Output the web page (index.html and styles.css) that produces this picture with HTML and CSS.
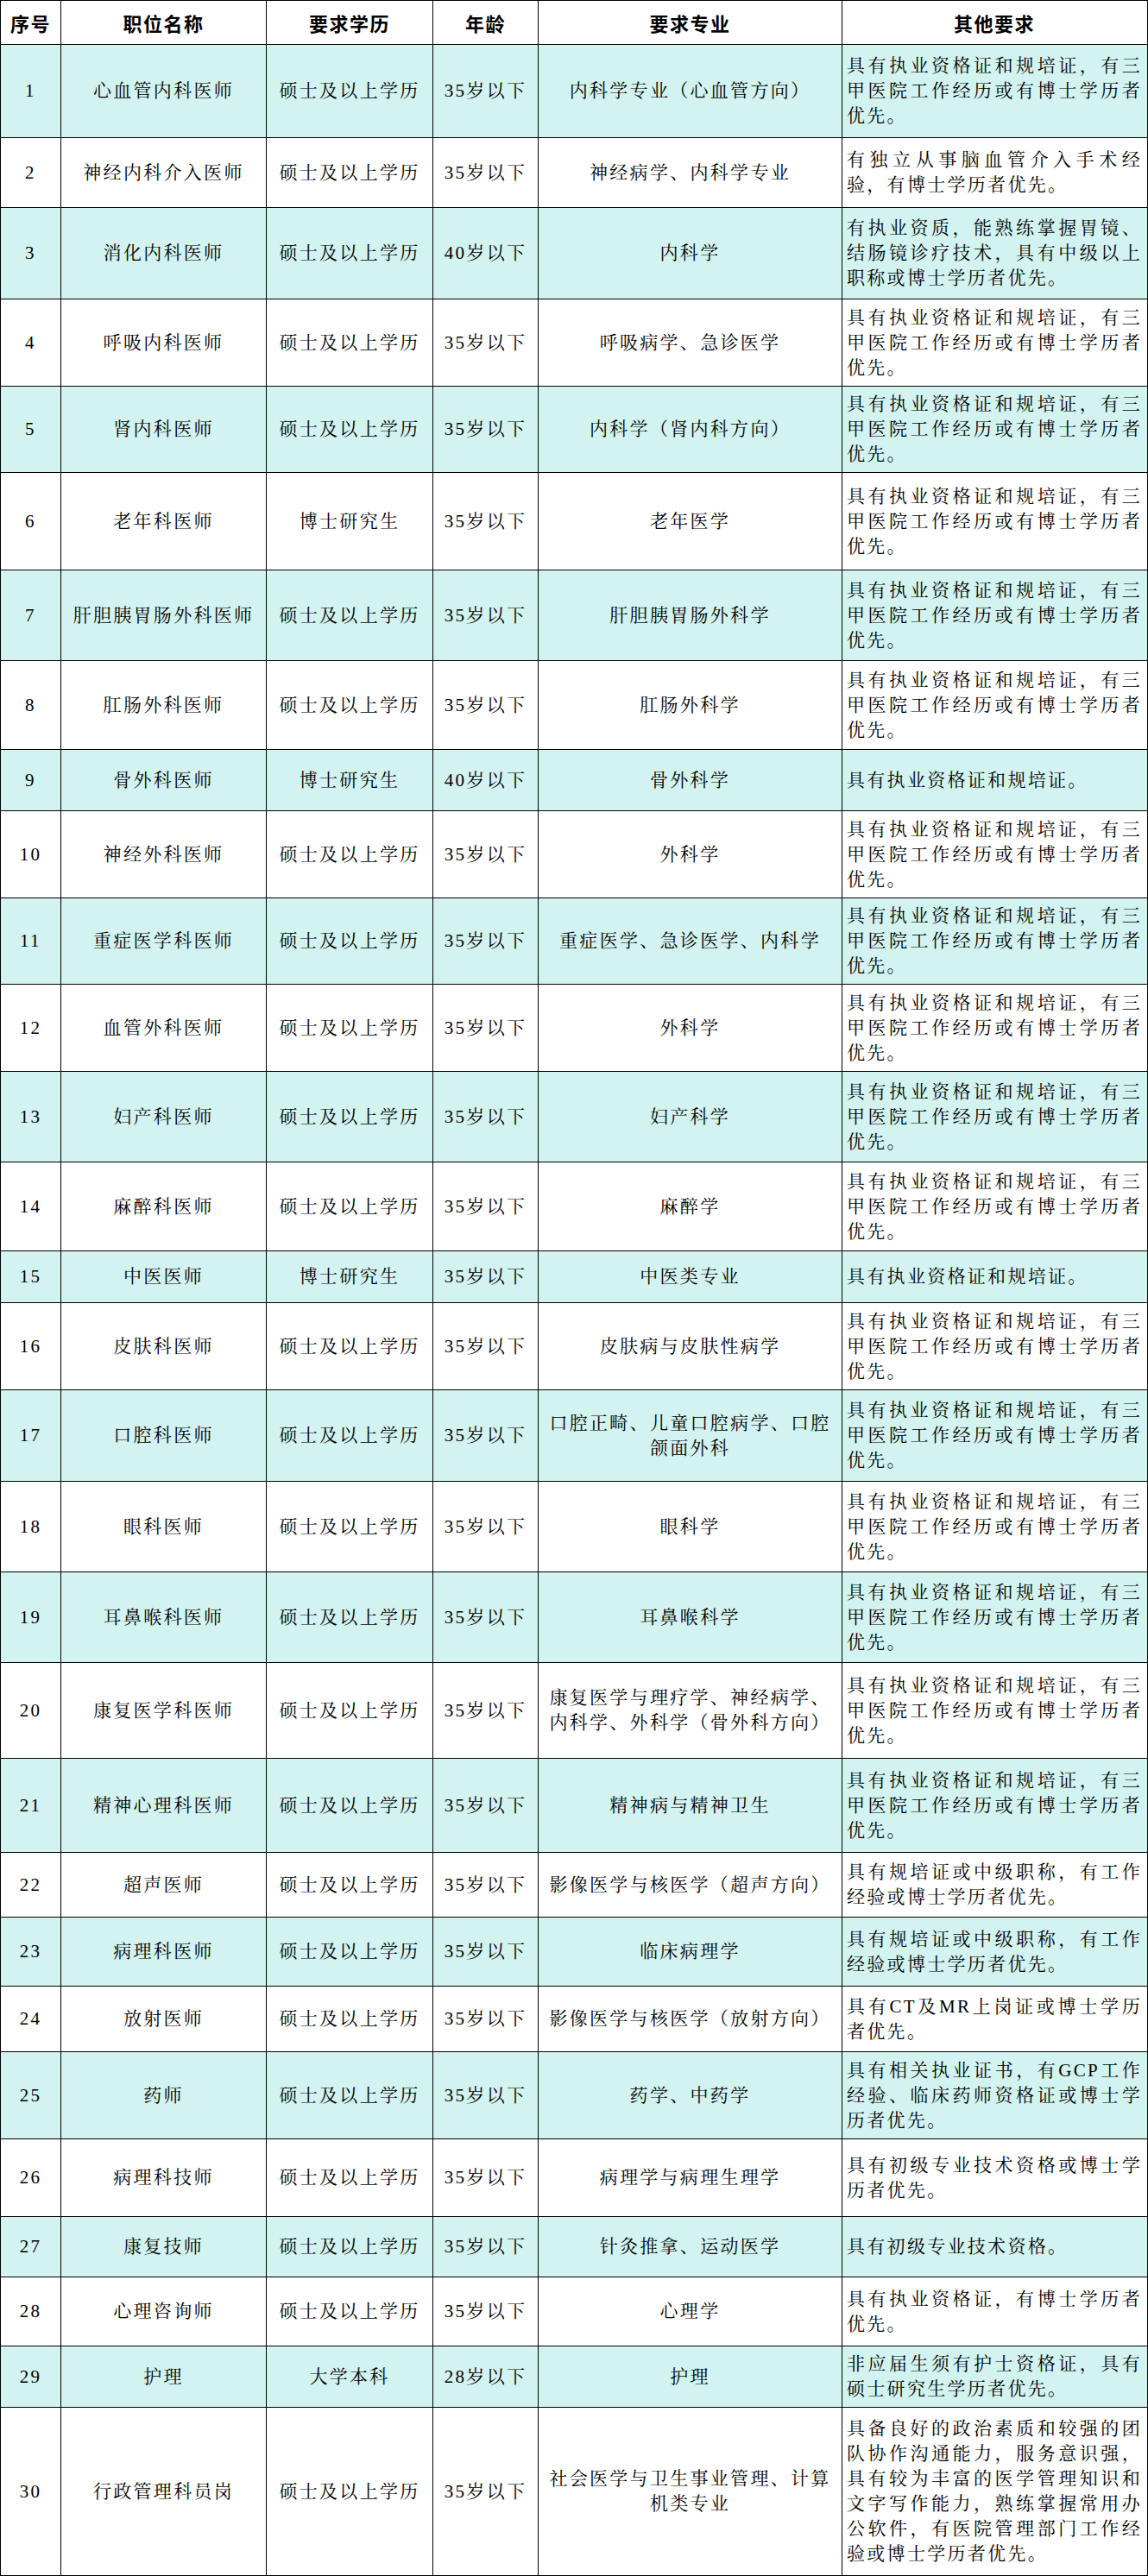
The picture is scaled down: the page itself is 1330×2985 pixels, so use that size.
FILE: index.html
```html
<!DOCTYPE html>
<html lang="zh-CN">
<head>
<meta charset="utf-8">
<title>招聘岗位表</title>
<link rel="stylesheet" href="styles.css">
</head>
<body>
<div class="table">
  <div class="row head h52">
    <div class="c c1">序号</div><div class="c c2">职位名称</div><div class="c c3">要求学历</div><div class="c c4">年龄</div><div class="c c5">要求专业</div><div class="c c6 ctr">其他要求</div>
  </div>
  <div class="row alt h108">
    <div class="c c1">1</div><div class="c c2">心血管内科医师</div><div class="c c3">硕士及以上学历</div><div class="c c4">35岁以下</div><div class="c c5">内科学专业（心血管方向）</div><div class="c c6">具有执业资格证和规培证，有三甲医院工作经历或有博士学历者优先。</div>
  </div>
  <div class="row h81">
    <div class="c c1">2</div><div class="c c2">神经内科介入医师</div><div class="c c3">硕士及以上学历</div><div class="c c4">35岁以下</div><div class="c c5">神经病学、内科学专业</div><div class="c c6">有独立从事脑血管介入手术经验，有博士学历者优先。</div>
  </div>
  <div class="row alt h106">
    <div class="c c1">3</div><div class="c c2">消化内科医师</div><div class="c c3">硕士及以上学历</div><div class="c c4">40岁以下</div><div class="c c5">内科学</div><div class="c c6">有执业资质，能熟练掌握胃镜、结肠镜诊疗技术，具有中级以上职称或博士学历者优先。</div>
  </div>
  <div class="row h101">
    <div class="c c1">4</div><div class="c c2">呼吸内科医师</div><div class="c c3">硕士及以上学历</div><div class="c c4">35岁以下</div><div class="c c5">呼吸病学、急诊医学</div><div class="c c6">具有执业资格证和规培证，有三甲医院工作经历或有博士学历者优先。</div>
  </div>
  <div class="row alt h100">
    <div class="c c1">5</div><div class="c c2">肾内科医师</div><div class="c c3">硕士及以上学历</div><div class="c c4">35岁以下</div><div class="c c5">内科学（肾内科方向）</div><div class="c c6">具有执业资格证和规培证，有三甲医院工作经历或有博士学历者优先。</div>
  </div>
  <div class="row h113">
    <div class="c c1">6</div><div class="c c2">老年科医师</div><div class="c c3">博士研究生</div><div class="c c4">35岁以下</div><div class="c c5">老年医学</div><div class="c c6">具有执业资格证和规培证，有三甲医院工作经历或有博士学历者优先。</div>
  </div>
  <div class="row alt h105">
    <div class="c c1">7</div><div class="c c2">肝胆胰胃肠外科医师</div><div class="c c3">硕士及以上学历</div><div class="c c4">35岁以下</div><div class="c c5">肝胆胰胃肠外科学</div><div class="c c6">具有执业资格证和规培证，有三甲医院工作经历或有博士学历者优先。</div>
  </div>
  <div class="row h103">
    <div class="c c1">8</div><div class="c c2">肛肠外科医师</div><div class="c c3">硕士及以上学历</div><div class="c c4">35岁以下</div><div class="c c5">肛肠外科学</div><div class="c c6">具有执业资格证和规培证，有三甲医院工作经历或有博士学历者优先。</div>
  </div>
  <div class="row alt h71">
    <div class="c c1">9</div><div class="c c2">骨外科医师</div><div class="c c3">博士研究生</div><div class="c c4">40岁以下</div><div class="c c5">骨外科学</div><div class="c c6">具有执业资格证和规培证。</div>
  </div>
  <div class="row h101">
    <div class="c c1">10</div><div class="c c2">神经外科医师</div><div class="c c3">硕士及以上学历</div><div class="c c4">35岁以下</div><div class="c c5">外科学</div><div class="c c6">具有执业资格证和规培证，有三甲医院工作经历或有博士学历者优先。</div>
  </div>
  <div class="row alt h100">
    <div class="c c1">11</div><div class="c c2">重症医学科医师</div><div class="c c3">硕士及以上学历</div><div class="c c4">35岁以下</div><div class="c c5">重症医学、急诊医学、内科学</div><div class="c c6">具有执业资格证和规培证，有三甲医院工作经历或有博士学历者优先。</div>
  </div>
  <div class="row h101">
    <div class="c c1">12</div><div class="c c2">血管外科医师</div><div class="c c3">硕士及以上学历</div><div class="c c4">35岁以下</div><div class="c c5">外科学</div><div class="c c6">具有执业资格证和规培证，有三甲医院工作经历或有博士学历者优先。</div>
  </div>
  <div class="row alt h105">
    <div class="c c1">13</div><div class="c c2">妇产科医师</div><div class="c c3">硕士及以上学历</div><div class="c c4">35岁以下</div><div class="c c5">妇产科学</div><div class="c c6">具有执业资格证和规培证，有三甲医院工作经历或有博士学历者优先。</div>
  </div>
  <div class="row h103">
    <div class="c c1">14</div><div class="c c2">麻醉科医师</div><div class="c c3">硕士及以上学历</div><div class="c c4">35岁以下</div><div class="c c5">麻醉学</div><div class="c c6">具有执业资格证和规培证，有三甲医院工作经历或有博士学历者优先。</div>
  </div>
  <div class="row alt h60">
    <div class="c c1">15</div><div class="c c2">中医医师</div><div class="c c3">博士研究生</div><div class="c c4">35岁以下</div><div class="c c5">中医类专业</div><div class="c c6">具有执业资格证和规培证。</div>
  </div>
  <div class="row h101">
    <div class="c c1">16</div><div class="c c2">皮肤科医师</div><div class="c c3">硕士及以上学历</div><div class="c c4">35岁以下</div><div class="c c5">皮肤病与皮肤性病学</div><div class="c c6">具有执业资格证和规培证，有三甲医院工作经历或有博士学历者优先。</div>
  </div>
  <div class="row alt h106">
    <div class="c c1">17</div><div class="c c2">口腔科医师</div><div class="c c3">硕士及以上学历</div><div class="c c4">35岁以下</div><div class="c c5">口腔正畸、儿童口腔病学、口腔颌面外科</div><div class="c c6">具有执业资格证和规培证，有三甲医院工作经历或有博士学历者优先。</div>
  </div>
  <div class="row h105">
    <div class="c c1">18</div><div class="c c2">眼科医师</div><div class="c c3">硕士及以上学历</div><div class="c c4">35岁以下</div><div class="c c5">眼科学</div><div class="c c6">具有执业资格证和规培证，有三甲医院工作经历或有博士学历者优先。</div>
  </div>
  <div class="row alt h105">
    <div class="c c1">19</div><div class="c c2">耳鼻喉科医师</div><div class="c c3">硕士及以上学历</div><div class="c c4">35岁以下</div><div class="c c5">耳鼻喉科学</div><div class="c c6">具有执业资格证和规培证，有三甲医院工作经历或有博士学历者优先。</div>
  </div>
  <div class="row h111">
    <div class="c c1">20</div><div class="c c2">康复医学科医师</div><div class="c c3">硕士及以上学历</div><div class="c c4">35岁以下</div><div class="c c5">康复医学与理疗学、神经病学、内科学、外科学（骨外科方向）</div><div class="c c6">具有执业资格证和规培证，有三甲医院工作经历或有博士学历者优先。</div>
  </div>
  <div class="row alt h109">
    <div class="c c1">21</div><div class="c c2">精神心理科医师</div><div class="c c3">硕士及以上学历</div><div class="c c4">35岁以下</div><div class="c c5">精神病与精神卫生</div><div class="c c6">具有执业资格证和规培证，有三甲医院工作经历或有博士学历者优先。</div>
  </div>
  <div class="row h75">
    <div class="c c1">22</div><div class="c c2">超声医师</div><div class="c c3">硕士及以上学历</div><div class="c c4">35岁以下</div><div class="c c5">影像医学与核医学（超声方向）</div><div class="c c6">具有规培证或中级职称，有工作经验或博士学历者优先。</div>
  </div>
  <div class="row alt h80">
    <div class="c c1">23</div><div class="c c2">病理科医师</div><div class="c c3">硕士及以上学历</div><div class="c c4">35岁以下</div><div class="c c5">临床病理学</div><div class="c c6">具有规培证或中级职称，有工作经验或博士学历者优先。</div>
  </div>
  <div class="row h76">
    <div class="c c1">24</div><div class="c c2">放射医师</div><div class="c c3">硕士及以上学历</div><div class="c c4">35岁以下</div><div class="c c5">影像医学与核医学（放射方向）</div><div class="c c6">具有CT及MR上岗证或博士学历者优先。</div>
  </div>
  <div class="row alt h101">
    <div class="c c1">25</div><div class="c c2">药师</div><div class="c c3">硕士及以上学历</div><div class="c c4">35岁以下</div><div class="c c5">药学、中药学</div><div class="c c6">具有相关执业证书，有GCP工作经验、临床药师资格证或博士学历者优先。</div>
  </div>
  <div class="row h90">
    <div class="c c1">26</div><div class="c c2">病理科技师</div><div class="c c3">硕士及以上学历</div><div class="c c4">35岁以下</div><div class="c c5">病理学与病理生理学</div><div class="c c6">具有初级专业技术资格或博士学历者优先。</div>
  </div>
  <div class="row alt h70">
    <div class="c c1">27</div><div class="c c2">康复技师</div><div class="c c3">硕士及以上学历</div><div class="c c4">35岁以下</div><div class="c c5">针灸推拿、运动医学</div><div class="c c6">具有初级专业技术资格。</div>
  </div>
  <div class="row h80">
    <div class="c c1">28</div><div class="c c2">心理咨询师</div><div class="c c3">硕士及以上学历</div><div class="c c4">35岁以下</div><div class="c c5">心理学</div><div class="c c6">具有执业资格证，有博士学历者优先。</div>
  </div>
  <div class="row alt h71">
    <div class="c c1">29</div><div class="c c2">护理</div><div class="c c3">大学本科</div><div class="c c4">28岁以下</div><div class="c c5">护理</div><div class="c c6">非应届生须有护士资格证，具有硕士研究生学历者优先。</div>
  </div>
  <div class="row h195">
    <div class="c c1">30</div><div class="c c2">行政管理科员岗</div><div class="c c3">硕士及以上学历</div><div class="c c4">35岁以下</div><div class="c c5">社会医学与卫生事业管理、计算机类专业</div><div class="c c6">具备良好的政治素质和较强的团队协作沟通能力，服务意识强，具有较为丰富的医学管理知识和文字写作能力，熟练掌握常用办公软件，有医院管理部门工作经验或博士学历者优先。</div>
  </div>
</div>
</body>
</html>
```

FILE: styles.css
```css
html, body {
  margin: 0;
  padding: 0;
  background: #ffffff;
}

.table {
  width: 1330px;
  font-family: "Liberation Serif", "Noto Serif CJK SC", "Noto Sans CJK SC", serif;
  font-size: 21px;
  line-height: 29px;
  color: #000;
  letter-spacing: 2.3px;
}

.row {
  display: grid;
  grid-template-columns: 71px 238px 193px 122px 352px 354px;
  box-sizing: border-box;
  border-bottom: 1px solid #000;
  background: #fff;
}

.row.alt {
  background: #d2f3f0;
}

.row.head {
  border-top: 1px solid #000;
  font-family: "Noto Sans CJK SC", sans-serif;
  font-weight: 700;
  font-size: 22px;
  letter-spacing: 1.5px;
}

.c {
  display: flex;
  align-items: center;
  justify-content: center;
  text-align: center;
  border-right: 1px solid #000;
  padding: 0 4px;
  min-width: 0;
}

.c1 {
  border-left: 1px solid #000;
  padding: 0;
}

.c5 {
  padding: 0 5px;
}

.c6 {
  justify-content: flex-start;
  text-align: justify;
  padding: 0 6px 0 5px;
}

.c6.ctr {
  justify-content: center;
  text-align: center;
}

.h52 { height: 52px; }
.h60 { height: 60px; }
.h70 { height: 70px; }
.h71 { height: 71px; }
.h75 { height: 75px; }
.h76 { height: 76px; }
.h80 { height: 80px; }
.h81 { height: 81px; }
.h90 { height: 90px; }
.h100 { height: 100px; }
.h101 { height: 101px; }
.h103 { height: 103px; }
.h105 { height: 105px; }
.h106 { height: 106px; }
.h108 { height: 108px; }
.h109 { height: 109px; }
.h111 { height: 111px; }
.h113 { height: 113px; }
.h195 { height: 195px; }
```
